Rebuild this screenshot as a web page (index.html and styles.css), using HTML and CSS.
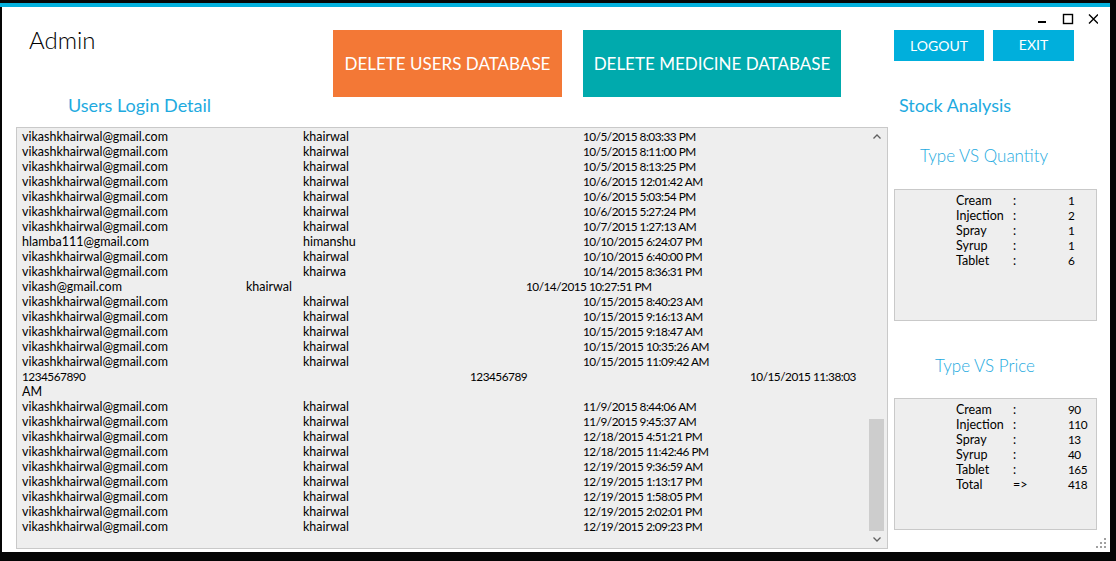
FILE: index.html
```html
<!DOCTYPE html>
<html>
<head>
<meta charset="utf-8">
<link rel="stylesheet" href="styles.css">
</head>
<body>
<div class="topbar"></div>
<div class="window">
  <div class="controls">
    <svg width="60" height="12" viewBox="0 0 60 12">
      <rect x="0" y="8" width="8" height="2" fill="#000"/>
      <rect x="25.5" y="1.5" width="9" height="9" fill="none" stroke="#000" stroke-width="1.4"/>
      <path d="M51 1.5 L60 10.5 M60 1.5 L51 10.5" stroke="#000" stroke-width="1.4"/>
    </svg>
  </div>
  <header class="header">
    <div class="admin">Admin</div>
    <button class="btn big orange">DELETE USERS DATABASE</button>
    <button class="btn big teal">DELETE MEDICINE DATABASE</button>
    <button class="btn small logout">LOGOUT</button>
    <button class="btn small exit">EXIT</button>
  </header>
  <div class="main">
    <section class="left">
      <h2 class="title users">Users Login Detail</h2>
      <div class="table">
        <div class="rows">
          <div class="r"><span>vikashkhairwal@gmail.com</span><span>khairwal</span><span class="d">10/5/2015 8:03:33 PM</span></div>
          <div class="r"><span>vikashkhairwal@gmail.com</span><span>khairwal</span><span class="d">10/5/2015 8:11:00 PM</span></div>
          <div class="r"><span>vikashkhairwal@gmail.com</span><span>khairwal</span><span class="d">10/5/2015 8:13:25 PM</span></div>
          <div class="r"><span>vikashkhairwal@gmail.com</span><span>khairwal</span><span class="d">10/6/2015 12:01:42 AM</span></div>
          <div class="r"><span>vikashkhairwal@gmail.com</span><span>khairwal</span><span class="d">10/6/2015 5:03:54 PM</span></div>
          <div class="r"><span>vikashkhairwal@gmail.com</span><span>khairwal</span><span class="d">10/6/2015 5:27:24 PM</span></div>
          <div class="r"><span>vikashkhairwal@gmail.com</span><span>khairwal</span><span class="d">10/7/2015 1:27:13 AM</span></div>
          <div class="r"><span>hlamba111@gmail.com</span><span>himanshu</span><span class="d">10/10/2015 6:24:07 PM</span></div>
          <div class="r"><span>vikashkhairwal@gmail.com</span><span>khairwal</span><span class="d">10/10/2015 6:40:00 PM</span></div>
          <div class="r"><span>vikashkhairwal@gmail.com</span><span>khairwa</span><span class="d">10/14/2015 8:36:31 PM</span></div>
          <div class="r s"><span>vikash@gmail.com</span><span>khairwal</span><span class="d">10/14/2015 10:27:51 PM</span></div>
          <div class="r"><span>vikashkhairwal@gmail.com</span><span>khairwal</span><span class="d">10/15/2015 8:40:23 AM</span></div>
          <div class="r"><span>vikashkhairwal@gmail.com</span><span>khairwal</span><span class="d">10/15/2015 9:16:13 AM</span></div>
          <div class="r"><span>vikashkhairwal@gmail.com</span><span>khairwal</span><span class="d">10/15/2015 9:18:47 AM</span></div>
          <div class="r"><span>vikashkhairwal@gmail.com</span><span>khairwal</span><span class="d">10/15/2015 10:35:26 AM</span></div>
          <div class="r"><span>vikashkhairwal@gmail.com</span><span>khairwal</span><span class="d">10/15/2015 11:09:42 AM</span></div>
          <div class="r w"><span class="d">1234567890</span><span class="d">123456789</span><span class="d">10/15/2015 11:38:03</span></div>
          <div class="r"><span>AM</span></div>
          <div class="r"><span>vikashkhairwal@gmail.com</span><span>khairwal</span><span class="d">11/9/2015 8:44:06 AM</span></div>
          <div class="r"><span>vikashkhairwal@gmail.com</span><span>khairwal</span><span class="d">11/9/2015 9:45:37 AM</span></div>
          <div class="r"><span>vikashkhairwal@gmail.com</span><span>khairwal</span><span class="d">12/18/2015 4:51:21 PM</span></div>
          <div class="r"><span>vikashkhairwal@gmail.com</span><span>khairwal</span><span class="d">12/18/2015 11:42:46 PM</span></div>
          <div class="r"><span>vikashkhairwal@gmail.com</span><span>khairwal</span><span class="d">12/19/2015 9:36:59 AM</span></div>
          <div class="r"><span>vikashkhairwal@gmail.com</span><span>khairwal</span><span class="d">12/19/2015 1:13:17 PM</span></div>
          <div class="r"><span>vikashkhairwal@gmail.com</span><span>khairwal</span><span class="d">12/19/2015 1:58:05 PM</span></div>
          <div class="r"><span>vikashkhairwal@gmail.com</span><span>khairwal</span><span class="d">12/19/2015 2:02:01 PM</span></div>
          <div class="r"><span>vikashkhairwal@gmail.com</span><span>khairwal</span><span class="d">12/19/2015 2:09:23 PM</span></div>
        </div>
        <div class="scrollbar">
          <div class="arrow">
            <svg width="8" height="5" viewBox="0 0 8 5"><path d="M0.5 4.5 L4 1 L7.5 4.5" fill="none" stroke="#606060" stroke-width="1.3"/></svg>
          </div>
          <div class="track"><div class="thumb"></div></div>
          <div class="arrow">
            <svg width="8" height="5" viewBox="0 0 8 5"><path d="M0.5 0.5 L4 4 L7.5 0.5" fill="none" stroke="#606060" stroke-width="1.3"/></svg>
          </div>
        </div>
      </div>
    </section>
    <section class="right">
      <h2 class="title stock">Stock Analysis</h2>
      <h3 class="sub qty">Type VS Quantity</h3>
      <div class="box">
        <div class="sr"><span>Cream</span><span>:</span><span class="d">1</span></div>
        <div class="sr"><span>Injection</span><span>:</span><span class="d">2</span></div>
        <div class="sr"><span>Spray</span><span>:</span><span class="d">1</span></div>
        <div class="sr"><span>Syrup</span><span>:</span><span class="d">1</span></div>
        <div class="sr"><span>Tablet</span><span>:</span><span class="d">6</span></div>
      </div>
      <h3 class="sub price">Type VS Price</h3>
      <div class="box">
        <div class="sr"><span>Cream</span><span>:</span><span class="d">90</span></div>
        <div class="sr"><span>Injection</span><span>:</span><span class="d">110</span></div>
        <div class="sr"><span>Spray</span><span>:</span><span class="d">13</span></div>
        <div class="sr"><span>Syrup</span><span>:</span><span class="d">40</span></div>
        <div class="sr"><span>Tablet</span><span>:</span><span class="d">165</span></div>
        <div class="sr"><span>Total</span><span>=&gt;</span><span class="d">418</span></div>
      </div>
    </section>
  </div>
  <svg class="grip" width="10" height="10" viewBox="0 0 10 10">
    <rect x="8" y="0" width="2" height="2" fill="#a0a0a0"/>
    <rect x="4" y="4" width="2" height="2" fill="#a0a0a0"/>
    <rect x="8" y="4" width="2" height="2" fill="#a0a0a0"/>
    <rect x="0" y="8" width="2" height="2" fill="#a0a0a0"/>
    <rect x="4" y="8" width="2" height="2" fill="#a0a0a0"/>
    <rect x="8" y="8" width="2" height="2" fill="#a0a0a0"/>
  </svg>
</div>
</body>
</html>
```

FILE: styles.css
```css
* { box-sizing: border-box; }
html, body { margin: 0; padding: 0; }
body {
  background: #050505;
  width: 1116px;
  height: 561px;
  overflow: hidden;
  padding-top: 3px;
  font-family: Lato, "Open Sans", sans-serif;
}
.topbar {
  width: 1110px;
  height: 4px;
  background: #03b0dd;
}
.window {
  position: relative;
  margin-left: 2px;
  width: 1108px;
  height: 545px;
  background: #ffffff;
  display: flex;
  flex-direction: column;
}
.controls {
  position: absolute;
  right: 12px;
  top: 6px;
  line-height: 0;
}
.header {
  height: 86px;
  display: flex;
  align-items: flex-start;
  padding: 23px 0 0 27px;
}
.admin {
  width: 304px;
  margin-top: -3px;
  font-size: 24px;
  line-height: 26px;
  font-weight: 300;
  color: #000;
}
.btn {
  border: none;
  color: #fff;
  font-family: Lato, "Open Sans", sans-serif;
  display: flex;
  align-items: center;
  justify-content: center;
  padding: 0;
}
.big {
  height: 67px;
  font-size: 17px;
  font-weight: 400;
}
.orange { width: 229px; background: #f37836; }
.teal { width: 258px; margin-left: 21px; background: #00aaad; }
.small {
  height: 31px;
  font-size: 14px;
  background: #00afdc;
}
.logout { width: 90px; margin-left: 53px; }
.exit { width: 81px; margin-left: 9px; padding-bottom: 3px; }
.main {
  flex: 1;
  display: flex;
}
.left { width: 886px; }
.title {
  margin: 0;
  height: 34px;
  padding-top: 1px;
  font-size: 18px;
  line-height: 22px;
  font-weight: 400;
  color: #1eaae0;
}
.users { padding-left: 66px; }
.table {
  margin-left: 14px;
  width: 872px;
  height: 422px;
  border: 1px solid #c9c9c9;
  background: #eeeeee;
  display: flex;
}
.rows {
  flex: 1;
  padding: 1px 0 0 5px;
  font-size: 12.5px;
  line-height: 15px;
  color: #000;
}
.r {
  display: grid;
  grid-template-columns: 281px 280px auto;
  white-space: nowrap;
  height: 15px;
}
.r.s { grid-template-columns: 224px 280px auto; }
.r.w { grid-template-columns: 448px 280px auto; }
.d {
  font-size: 11.8px;
  letter-spacing: -0.5px;
}
.scrollbar {
  width: 17px;
  margin-right: 2px;
  display: flex;
  flex-direction: column;
}
.arrow {
  height: 17px;
  display: flex;
  align-items: center;
  justify-content: center;
}
.track {
  flex: 1;
  display: flex;
  flex-direction: column;
  justify-content: flex-end;
  align-items: center;
}
.thumb {
  width: 15px;
  height: 112px;
  background: #cdcdcd;
}
.right {
  flex: 1;
  padding-left: 6px;
}
.stock { padding-left: 5px; }
.sub {
  margin: 0;
  font-size: 17px;
  line-height: 22px;
  font-weight: 300;
  color: #1eaae0;
}
.qty { height: 62px; padding: 18px 0 0 26px; }
.price { height: 77px; padding: 34px 0 0 41px; }
.box {
  width: 203px;
  height: 132px;
  border: 1px solid #c9c9c9;
  background: #eeeeee;
  padding: 3px 0 0 61px;
  font-size: 12.5px;
  line-height: 15px;
  color: #000;
}
.sr {
  display: grid;
  grid-template-columns: 57px 55px auto;
  height: 15px;
}
.grip {
  position: absolute;
  right: 4px;
  bottom: 4px;
}
```
